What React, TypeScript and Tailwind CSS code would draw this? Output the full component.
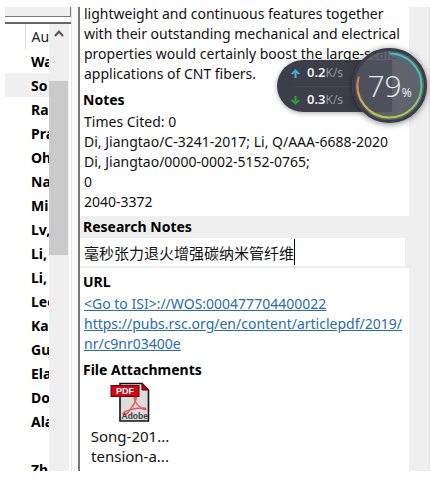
import type { ReactNode } from 'react'

const authors = ['Wa', 'So', 'Ra', 'Pra', 'Oh', 'Na', 'Mi', 'Lv,', 'Li,', 'Li,', 'Lee', 'Ka', 'Gu', 'Ela', 'Do', 'Ala', '', 'Zh']

const notes = [
  'Times Cited: 0',
  'Di, Jiangtao/C-3241-2017; Li, Q/AAA-6688-2020',
  'Di, Jiangtao/0000-0002-5152-0765;',
  '0',
  '2040-3372',
]

function Field({ title, children }: { title: string; children: ReactNode }) {
  return (
    <section>
      <h2 className="px-[3px] pt-1 text-[14px] leading-5 font-bold text-black">{title}</h2>
      <div className="px-1 py-[2px]">{children}</div>
    </section>
  )
}

function AuthorList() {
  return (
    <aside className="flex w-[66px] shrink-0 flex-col">
      <div className="h-[10px] shrink-0 border-r border-b border-[#777] bg-[#efefef]" />
      <div className="mt-[5px] flex min-h-0 flex-1 border-t-2 border-[#666]">
        <div className="w-11 shrink-0 overflow-hidden">
          <table className="w-full table-fixed border-collapse text-[14px] whitespace-nowrap">
            <thead>
              <tr className="h-[25px]">
                <th className="w-5 border-r border-[#ddd]" />
                <th className="pl-[6px] text-left font-normal text-[#222]">Au</th>
              </tr>
            </thead>
            <tbody>
              {authors.map((name, i) => (
                <tr key={i} className={name === 'So' ? 'h-6 bg-[#f0f0f0]' : 'h-6'}>
                  <td />
                  <td className="pl-[6px] font-bold text-black">{name}</td>
                </tr>
              ))}
            </tbody>
          </table>
        </div>
        <div className="flex w-5 shrink-0 flex-col bg-[#efefef]">
          <button aria-label="Scroll up" className="flex h-[57px] justify-center pt-[6px]">
            <svg width="10" height="7" viewBox="0 0 10 7" fill="none" stroke="#555" strokeWidth="2">
              <path d="M1 6 L5 1.5 L9 6" />
            </svg>
          </button>
          <div className="mr-px h-[174px] bg-[#cacaca]" />
        </div>
      </div>
    </aside>
  )
}

function PdfIcon() {
  return (
    <svg width="40" height="40" viewBox="0 0 40 40">
      <path d="M10 1.5 H32 L38.5 8 V39 H10 Z" fill="#dcdcdc" stroke="#111" strokeWidth="1.6" />
      <path d="M32 1 V8 H39 Z" fill="#c00012" stroke="#500" />
      <path
        d="M25 15 C28 14 25 21 22 25 C18 32 14 34 13 32 C14 29 22 26 34 26 C38 27 35 29 31 26 C26 22 23 17 25 15"
        fill="none"
        stroke="#f0525c"
        strokeWidth="1.5"
      />
      <rect x="1" y="3.5" width="28" height="11" fill="#cf0718" stroke="#650008" />
      <text x="6" y="12" fontFamily="Liberation Sans" fontSize="9" fontWeight="700" fill="#fff">PDF</text>
      <text x="11.5" y="37" fontFamily="Liberation Sans" fontSize="8.5" fontWeight="700" fill="#444">Adobe</text>
    </svg>
  )
}

function Rate({ value, up }: { value: string; up?: boolean }) {
  return (
    <div className="flex h-[27px] items-center">
      <svg width="9" height="9" viewBox="0 0 9 9" fill={up ? '#45a9e0' : '#2f9e3a'} className="mr-[7px]">
        <path d={up ? 'M4.5 0 L9 4.5 L7.5 5.5 L5.6 4 V9 H3.4 V4 L1.5 5.5 L0 4.5 Z' : 'M4.5 9 L9 4.5 L7.5 3.5 L5.6 5 V0 H3.4 V5 L1.5 3.5 L0 4.5 Z'} />
      </svg>
      <span className="text-[13px] font-semibold text-[#f0f0f2]">{value}</span>
      <span className="text-[12px] text-[#9496a0]">K/s</span>
    </div>
  )
}

// Floating network monitor, sits over the record panel
function SpeedWidget() {
  return (
    <div className="absolute top-[48px] right-[3px] flex items-center">
      <div className="-mr-10 h-[52px] w-[115px] rounded-l-full bg-[#31343f]/95 pl-[14px] shadow-[0_1px_5px_rgba(0,0,0,0.35)]">
        <Rate value="0.2" up />
        <div className="-mt-px h-px bg-[#444752]" />
        <Rate value="0.3" />
      </div>
      <div className="relative flex size-[75px] items-center justify-center rounded-full bg-[#50535f]/90 shadow-[0_1px_6px_rgba(0,0,0,0.5)]">
        <svg className="absolute inset-0" viewBox="0 0 75 75" fill="none" strokeWidth="2">
          <defs>
            <linearGradient id="right" x1="0" y1="0" x2="0" y2="1">
              <stop offset="0" stopColor="#35c5d0" />
              <stop offset="0.55" stopColor="#48c98b" />
              <stop offset="1" stopColor="#bccc48" />
            </linearGradient>
            <linearGradient id="left" x1="0" y1="0" x2="0" y2="1">
              <stop offset="0" stopColor="#e9694f" />
              <stop offset="0.5" stopColor="#dba04f" />
              <stop offset="1" stopColor="#bccc48" />
            </linearGradient>
          </defs>
          <circle cx="37.5" cy="37.5" r="36" stroke="#3b3e49" strokeWidth="3" />
          <path d="M37.5 5.5 A32 32 0 0 1 37.5 69.5" stroke="url(#right)" />
          <path d="M37.5 69.5 A32 32 0 0 1 6.8 28.5" stroke="url(#left)" />
        </svg>
        <span className="relative flex items-baseline text-[#e8e9ed]">
          <span className="font-['Open_Sans'] text-[30px] leading-8 font-light">79</span>
          <span className="text-[12px]">%</span>
        </span>
      </div>
    </div>
  )
}

export default function App() {
  return (
    <div className="relative h-screen overflow-hidden bg-white py-[7px] pl-[5px] font-['Noto_Sans','Noto_Sans_CJK_SC',sans-serif] text-[14px] text-[#111]">
      <div className="flex h-full overflow-hidden">
        <AuthorList />
        <div className="w-[7px] shrink-0 border-l border-[#e5e5e5] bg-[#fafafa]" />
        <main className="min-w-0 flex-1 border-l-2 border-[#777] leading-5">
          <p className="-mt-[3px] px-1 pb-[2px]">
            lightweight and continuous features together
            <br />
            with their outstanding mechanical and electrical
            <br />
            properties would certainly boost the large-scale
            <br />
            applications of CNT fibers.
          </p>
          <Field title="Notes">
            {notes.map((line) => (
              <p key={line}>{line}</p>
            ))}
          </Field>
          <div className="mt-[2px] border-b-2 border-[#efefef]">
            <label htmlFor="research" className="block h-[22px] bg-[#efefef] px-[3px] pt-px text-[14px] font-bold text-black">
              Research Notes
            </label>
            <div className="relative border-r-4 border-[#efefef]">
              <input
                id="research"
                defaultValue="毫秒张力退火增强碳纳米管纤维"
                className="block h-7 w-full px-1 text-[15px] outline-none"
              />
              <span className="absolute top-px left-[214px] h-[26px] w-px bg-black" />
            </div>
          </div>
          <Field title="URL">
            <div className="text-[#2a6bb0] underline">
              <a href="#isi" className="block">&lt;Go to ISI&gt;://WOS:000477704400022</a>
              <a href="#article" className="block">
                https://pubs.rsc.org/en/content/articlepdf/2019/
                <br />
                nr/c9nr03400e
              </a>
            </div>
          </Field>
          <Field title="File Attachments">
            <button className="flex w-[92px] flex-col items-center gap-1 text-[15px]">
              <PdfIcon />
              <span>
                Song-201...
                <br />
                tension-a...
              </span>
            </button>
          </Field>
        </main>
        <div className="w-[21px] shrink-0 border-r border-[#e0e0e0] bg-[#efefef]" />
      </div>
      <SpeedWidget />
    </div>
  )
}
